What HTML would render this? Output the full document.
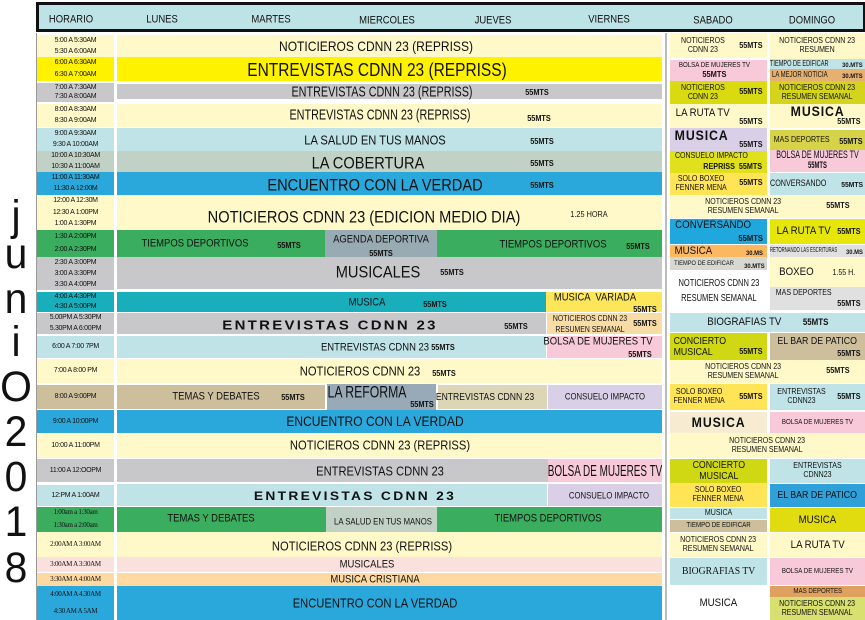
<!DOCTYPE html>
<html><head><meta charset="utf-8">
<style>
*{margin:0;padding:0;box-sizing:border-box}
body{width:865px;height:620px;overflow:hidden;background:#fff;position:relative;font-family:"Liberation Sans",sans-serif;color:#111}
.b{position:absolute}
.t{position:absolute;white-space:nowrap;transform:translate(-50%,-50%) scaleX(.86);line-height:1}
.c{position:absolute;display:flex;align-items:center;justify-content:center;text-align:center;font-size:8px;line-height:1.1;overflow:hidden;white-space:nowrap}
.c p{transform:scaleX(.88)}
.r{position:absolute;right:3px;bottom:1px;font-weight:bold;font-size:8px;transform:scaleX(.9)}
.tm{position:absolute;left:37px;width:77px;display:flex;flex-direction:column;justify-content:space-around;align-items:center;font-size:7px;letter-spacing:-0.3px;line-height:1.1}
.m{font-size:8.5px;font-weight:bold}
.w{letter-spacing:2px;font-weight:bold;transform:translate(-50%,-50%) scaleX(1.15)}
.n{transform:translate(-50%,-50%) scaleX(0.72)}
.L{position:absolute;left:16px;font-size:43px;transform:translateX(-50%) scaleX(.95);line-height:1;font-family:"Liberation Sans",sans-serif}
</style></head><body>
<div class="b" style="left:36px;top:2px;width:829px;height:30px;background:#bde3e6;border:3px solid #111;border-right:2px solid #111"></div>
<div class="t" style="left:71px;top:20px;font-size:11px">HORARIO</div>
<div class="t" style="left:162px;top:20px;font-size:11px">LUNES</div>
<div class="t" style="left:271px;top:20px;font-size:11px">MARTES</div>
<div class="t" style="left:387px;top:21px;font-size:11px">MIERCOLES</div>
<div class="t" style="left:493px;top:21px;font-size:11px">JUEVES</div>
<div class="t" style="left:609px;top:20px;font-size:11px">VIERNES</div>
<div class="t" style="left:713px;top:21px;font-size:11px">SABADO</div>
<div class="t" style="left:812px;top:21px;font-size:11px">DOMINGO</div>
<div class="b" style="left:36px;top:33px;width:1px;height:587px;background:#999"></div>
<div class="b" style="left:665px;top:33px;width:2px;height:587px;background:#bbb"></div>

<div class="L" style="top:195px">j</div>
<div class="L" style="top:233px">u</div>
<div class="L" style="top:278px">n</div>
<div class="L" style="top:321px">i</div>
<div class="L" style="top:366px">O</div>
<div class="L" style="top:411px">2</div>
<div class="L" style="top:456px">0</div>
<div class="L" style="top:501px">1</div>
<div class="L" style="top:547px">8</div>

<div class="tm" style="top:35px;height:22px;background:#fff8c8"><span>5:00 A 5:30AM</span><span>5:30 A 6:00AM</span></div>
<div class="b" style="left:117px;top:35px;width:545px;height:22px;background:#fff8c8"></div>
<div class="tm" style="top:57px;height:24px;background:#fff200"><span>6:00 A 6:30AM</span><span>6:30 A 7:00AM</span></div>
<div class="b" style="left:117px;top:57px;width:545px;height:24px;background:#fff200"></div>
<div class="tm" style="top:83px;height:19px;background:#c8c8ca"><span>7:00 A 7:30AM</span><span>7:30 A 8:00AM</span></div>
<div class="b" style="left:117px;top:84px;width:545px;height:15px;background:#c8c8ca"></div>
<div class="tm" style="top:104px;height:23px;background:#fff8c8"><span>8:00 A 8:30AM</span><span>8:30 A 9:00AM</span></div>
<div class="b" style="left:117px;top:104px;width:545px;height:23px;background:#fff8c8"></div>
<div class="tm" style="top:128px;height:23px;background:#bfe3e6"><span>9:00 A 9:30AM</span><span>9:30 A 10:00AM</span></div>
<div class="b" style="left:117px;top:128px;width:545px;height:23px;background:#bfe3e6"></div>
<div class="tm" style="top:151px;height:21px;background:#c2d1c6"><span>10:00 A 10:30AM</span><span>10:30 A 11:00AM</span></div>
<div class="b" style="left:117px;top:151px;width:545px;height:21px;background:#c2d1c6"></div>
<div class="tm" style="top:172px;height:23px;background:#2aa8dc"><span>11:00 A 11:30AM</span><span>11:30 A 12:00M</span></div>
<div class="b" style="left:117px;top:172px;width:545px;height:23px;background:#2aa8dc"></div>
<div class="tm" style="top:195px;height:35px;background:#fff8c8"><span>12:00 A 12:30M</span><span>12:30 A 1:00PM</span><span>1:00 A 1:30PM</span></div>
<div class="b" style="left:117px;top:195px;width:545px;height:35px;background:#fff8c8"></div>
<div class="tm" style="top:230px;height:27px;background:#3aad5e"><span>1:30 A 2:00PM</span><span>2:00 A 2:30PM</span></div>
<div class="b" style="left:117px;top:230px;width:545px;height:27px;background:#3aad5e"></div>
<div class="b" style="left:325px;top:230px;width:112px;height:27px;background:#98aab2"></div>
<div class="tm" style="top:257px;height:33px;background:#c8c8ca"><span>2:30 A 3:00PM</span><span>3:00 A 3:30PM</span><span>3:30 A 4:00PM</span></div>
<div class="b" style="left:117px;top:257px;width:545px;height:32px;background:#c8c8ca"></div>
<div class="tm" style="top:292px;height:20px;background:#18aebc"><span>4:00 A 4:30PM</span><span>4:30 A 5:00PM</span></div>
<div class="b" style="left:117px;top:292px;width:429px;height:20px;background:#18aebc"></div>
<div class="b" style="left:546px;top:292px;width:116px;height:20px;background:#fde65a"></div>
<div class="tm" style="top:313px;height:21px;background:#c8c8ca"><span>5.00PM A 5:30PM</span><span>5.30PM A 6:00PM</span></div>
<div class="b" style="left:117px;top:313px;width:429px;height:21px;background:#c8c8ca"></div>
<div class="b" style="left:547px;top:313px;width:115px;height:21px;background:#f7dca6"></div>
<div class="tm" style="top:336px;height:22px;background:#bfe3e6"><span>6:00 A 7:00 7PM</span></div>
<div class="b" style="left:117px;top:336px;width:429px;height:22px;background:#bfe3e6"></div>
<div class="b" style="left:547px;top:336px;width:115px;height:22px;background:#f8c9d9"></div>
<div class="tm" style="top:359px;height:24px;background:#fff8c8"><span>7:00 A 8:00 PM</span></div>
<div class="b" style="left:117px;top:359px;width:545px;height:24px;background:#fff8c8"></div>
<div class="tm" style="top:385px;height:24px;background:#cdbf9c"><span>8:00 A 9:00PM</span></div>
<div class="b" style="left:117px;top:385px;width:208px;height:24px;background:#cdbf9c"></div>
<div class="b" style="left:327px;top:384px;width:109px;height:26px;background:#98aab8"></div>
<div class="b" style="left:438px;top:385px;width:109px;height:24px;background:#ddd6b6"></div>
<div class="b" style="left:548px;top:385px;width:114px;height:24px;background:#d9d0e8"></div>
<div class="tm" style="top:410px;height:23px;background:#2aa8dc"><span>9:00 A 10:00PM</span></div>
<div class="b" style="left:117px;top:410px;width:545px;height:23px;background:#2aa8dc"></div>
<div class="tm" style="top:434px;height:24px;background:#fff8c8"><span>10:00 A 11:00PM</span></div>
<div class="b" style="left:117px;top:434px;width:545px;height:24px;background:#fff8c8"></div>
<div class="tm" style="top:459px;height:23px;background:#c8c8ca"><span>11:00 A 12:OOPM</span></div>
<div class="b" style="left:117px;top:459px;width:431px;height:23px;background:#c8c8ca"></div>
<div class="b" style="left:548px;top:459px;width:114px;height:23px;background:#f8c9d9"></div>
<div class="tm" style="top:485px;height:21px;background:#bfe3e6"><span>12:PM A 1:00AM</span></div>
<div class="b" style="left:117px;top:484px;width:430px;height:22px;background:#bfe3e6"></div>
<div class="b" style="left:548px;top:484px;width:114px;height:22px;background:#d9d0e8"></div>
<div class="tm" style="top:507px;height:25px;background:#3aad5e;font-family:'Liberation Serif',serif"><span>1:00am a 1:30am</span><span>1:30am a 2:00am</span></div>
<div class="b" style="left:117px;top:507px;width:545px;height:25px;background:#3aad5e"></div>
<div class="b" style="left:326px;top:507px;width:111px;height:25px;background:#c2d1c6"></div>
<div class="tm" style="top:532px;height:25px;background:#fff8c8;font-family:'Liberation Serif',serif"><span>2:00AM A 3:00AM</span></div>
<div class="b" style="left:117px;top:532px;width:545px;height:25px;background:#fff8c8"></div>
<div class="tm" style="top:557px;height:15px;background:#fbe1de;font-family:'Liberation Serif',serif"><span>3:00AM A 3:30AM</span></div>
<div class="b" style="left:117px;top:557px;width:545px;height:15px;background:#fbe1de"></div>
<div class="tm" style="top:573px;height:13px;background:#fed9a2;font-family:'Liberation Serif',serif"><span>3:30AM A 4:00AM</span></div>
<div class="b" style="left:117px;top:573px;width:545px;height:13px;background:#fed9a2"></div>
<div class="tm" style="top:586px;height:34px;background:#2aa8dc;font-family:'Liberation Serif',serif"><span>4:00AM A 4.30AM</span><span>4:30 AM A 5AM</span></div>
<div class="b" style="left:117px;top:586px;width:545px;height:34px;background:#2aa8dc"></div>

<div class="t" style="left:376px;top:46px;font-size:14px">NOTICIEROS CDNN 23 (REPRISS)</div>
<div class="t" style="left:377px;top:70px;font-size:18px">ENTREVISTAS CDNN 23 (REPRISS)</div>
<div class="t n" style="left:382px;top:92px;font-size:15px">ENTREVISTAS CDNN 23 (REPRISS)</div><div class="t m" style="left:537px;top:92px">55MTS</div>
<div class="t n" style="left:380px;top:115px;font-size:15px">ENTREVISTAS CDNN 23 (REPRISS)</div><div class="t m" style="left:539px;top:118px">55MTS</div>
<div class="t" style="left:375px;top:140px;font-size:13px">LA SALUD EN TUS MANOS</div><div class="t m" style="left:542px;top:141px">55MTS</div>
<div class="t" style="left:368px;top:163px;font-size:17px">LA COBERTURA</div><div class="t m" style="left:542px;top:163px">55MTS</div>
<div class="t" style="left:375px;top:185px;font-size:17px">ENCUENTRO CON LA VERDAD</div><div class="t m" style="left:542px;top:185px">55MTS</div>
<div class="t" style="left:364px;top:217px;font-size:17px">NOTICIEROS CDNN 23 (EDICION MEDIO DIA)</div><div class="t" style="left:589px;top:214px;font-size:8.5px">1.25 HORA</div>
<div class="t" style="left:195px;top:244px;font-size:11px">TIEMPOS DEPORTIVOS</div><div class="t m" style="left:289px;top:245px">55MTS</div>
<div class="t" style="left:381px;top:240px;font-size:11px">AGENDA DEPORTIVA</div><div class="t m" style="left:381px;top:253px">55MTS</div>
<div class="t" style="left:553px;top:245px;font-size:11px">TIEMPOS DEPORTIVOS</div><div class="t m" style="left:638px;top:246px">55MTS</div>
<div class="t" style="left:378px;top:272px;font-size:17px">MUSICALES</div><div class="t m" style="left:452px;top:272px">55MTS</div>
<div class="t" style="left:367px;top:303px;font-size:11px">MUSICA</div><div class="t m" style="left:435px;top:304px">55MTS</div>
<div class="t" style="left:595px;top:298px;font-size:11px">MUSICA &nbsp;VARIADA</div><div class="t m" style="left:645px;top:309px">55MTS</div>
<div class="t w" style="left:330px;top:325px;font-size:13px">ENTREVISTAS CDNN 23</div><div class="t m" style="left:516px;top:326px">55MTS</div>
<div class="t" style="left:590px;top:319px;font-size:8px">NOTICIEROS CDNN 23</div><div class="t" style="left:590px;top:330px;font-size:8px">RESUMEN SEMANAL</div><div class="t m" style="left:645px;top:323px">55MTS</div>
<div class="t" style="left:375px;top:348px;font-size:11px">ENTREVISTAS CDNN 23</div><div class="t m" style="left:443px;top:347px">55MTS</div>
<div class="t" style="left:598px;top:342px;font-size:11px">BOLSA DE MUJERES TV</div><div class="t m" style="left:640px;top:354px">55MTS</div>
<div class="t" style="left:360px;top:371px;font-size:13px">NOTICIEROS CDNN 23</div><div class="t m" style="left:444px;top:373px">55MTS</div>
<div class="t" style="left:216px;top:397px;font-size:11px">TEMAS Y DEBATES</div><div class="t m" style="left:293px;top:397px">55MTS</div>
<div class="t n" style="left:367px;top:392px;font-size:17px">LA REFORMA</div><div class="t m" style="left:422px;top:404px">55MTS</div>
<div class="t" style="left:485px;top:398px;font-size:10px">ENTREVISTAS CDNN 23</div>
<div class="t" style="left:605px;top:397px;font-size:9px">CONSUELO IMPACTO</div>
<div class="t" style="left:375px;top:421px;font-size:14px">ENCUENTRO CON LA VERDAD</div>
<div class="t" style="left:380px;top:445px;font-size:13px">NOTICIEROS CDNN 23 (REPRISS)</div>
<div class="t" style="left:380px;top:471px;font-size:13px">ENTREVISTAS CDNN 23</div>
<div class="t" style="left:605px;top:472px;font-size:16px;transform:translate(-50%,-50%) scaleX(.62)">BOLSA DE MUJERES TV</div>
<div class="t w" style="left:355px;top:496px;font-size:12px">ENTREVISTAS CDNN 23</div>
<div class="t" style="left:609px;top:496px;font-size:9px">CONSUELO IMPACTO</div>
<div class="t" style="left:211px;top:519px;font-size:11px">TEMAS Y DEBATES</div>
<div class="t" style="left:383px;top:522px;font-size:9px">LA SALUD EN TUS MANOS</div>
<div class="t" style="left:548px;top:519px;font-size:11px">TIEMPOS DEPORTIVOS</div>
<div class="t" style="left:362px;top:546px;font-size:13px">NOTICIEROS CDNN 23 (REPRISS)</div>
<div class="t" style="left:367px;top:565px;font-size:11px">MUSICALES</div>
<div class="t" style="left:375px;top:580px;font-size:11px">MUSICA CRISTIANA</div>
<div class="t" style="left:375px;top:603px;font-size:13px">ENCUENTRO CON LA VERDAD</div>

<!-- saturday -->
<div class="c" style="left:670px;top:33px;width:97px;height:25px;background:#fff8c8;justify-content:flex-start;padding-left:8px"><p>NOTICIEROS<br>CDNN 23</p><span class="r" style="bottom:7px">55MTS</span></div>
<div class="c" style="left:670px;top:60px;width:97px;height:21px;background:#f8c9d9;justify-content:flex-start;padding-left:4px"><p style="font-size:7px">BOLSA DE MUJERES TV<br><b style="font-size:8.5px">55MTS</b></p></div>
<div class="c" style="left:670px;top:81px;width:97px;height:23px;background:#dada10;justify-content:flex-start;padding-left:8px"><p>NOTICIEROS<br>CDNN 23</p><span class="r" style="bottom:7px">55MTS</span></div>
<div class="c" style="left:670px;top:104px;width:97px;height:24px;background:#fff8c8;justify-content:flex-start;padding-left:2px;align-items:flex-start;padding-top:3px"><p style="font-size:11px">LA RUTA TV</p><span class="r">55MTS</span></div>
<div class="c" style="left:670px;top:128px;width:97px;height:23px;background:#d9d0e8;justify-content:flex-start;align-items:flex-start;padding-left:1px"><p><b style="font-size:14px;letter-spacing:1px">MUSICA</b></p><span class="r">55MTS</span></div>
<div class="c" style="left:670px;top:151px;width:97px;height:22px;background:#e0e01c;justify-content:flex-start;align-items:flex-start;padding-left:0;padding-top:1px"><p>CONSUELO IMPACTO</p><span class="r" style="right:2px">REPRISS &nbsp;55MTS</span></div>
<div class="c" style="left:670px;top:173px;width:97px;height:22px;background:#ffe455;justify-content:flex-start;padding-left:2px"><p>SOLO BOXEO<br>FENNER MENA</p><span class="r" style="bottom:7px">55MTS</span></div>
<div class="c" style="left:670px;top:195px;width:195px;height:23px;background:#fff8c8;justify-content:flex-start;padding-left:30px"><p>NOTICIEROS CDNN 23<br>RESUMEN SEMANAL</p><span class="r" style="right:14px;bottom:7px">55MTS</span></div>
<div class="c" style="left:670px;top:219px;width:97px;height:25px;background:#20a8dc;justify-content:flex-start;align-items:flex-start;padding-left:0"><p style="font-size:11px">CONVERSANDO</p><span class="r" style="font-size:8.5px">55MTS</span></div>
<div class="c" style="left:670px;top:245px;width:97px;height:12px;background:#fbb860;justify-content:flex-start;padding-left:2px"><p style="font-size:11px">MUSICA</p><span class="r" style="font-size:6.5px;bottom:0">30.MS</span></div>
<div class="c" style="left:670px;top:257px;width:97px;height:13px;background:#d8d8d2;justify-content:flex-start;padding-left:0"><p style="font-size:6.5px">TIEMPO DE EDIFICAR</p><span class="r" style="font-size:6.5px;bottom:0;right:1px">30.MTS</span></div>
<div class="c" style="left:670px;top:272px;width:97px;height:38px;background:#fff"><p style="font-size:10px;line-height:1.5;transform:scaleX(.75)">NOTICIEROS CDNN 23<br>RESUMEN SEMANAL</p></div>
<div class="c" style="left:670px;top:313px;width:195px;height:19px;background:#bfe3e6"><p style="font-size:11px">BIOGRAFIAS TV &nbsp;&nbsp;&nbsp;&nbsp;&nbsp;&nbsp;&nbsp;<b style="font-size:9px">55MTS</b></p></div>
<div class="c" style="left:670px;top:333px;width:97px;height:27px;background:#d0d814;justify-content:flex-start;padding-left:0;text-align:left"><p style="font-size:10px">CONCIERTO<br>MUSICAL</p><span class="r" style="bottom:3px">55MTS</span></div>
<div class="c" style="left:670px;top:360px;width:195px;height:23px;background:#fff8c8;justify-content:flex-start;padding-left:30px"><p>NOTICIEROS CDNN 23<br>RESUMEN SEMANAL</p><span class="r" style="right:14px;bottom:7px">55MTS</span></div>
<div class="c" style="left:670px;top:384px;width:97px;height:26px;background:#ffe455;justify-content:flex-start;padding-left:0"><p>SOLO BOXEO<br>FENNER MENA</p><span class="r" style="bottom:8px">55MTS</span></div>
<div class="c" style="left:670px;top:412px;width:97px;height:21px;background:#f7ecd2"><p><b style="font-size:14px;letter-spacing:1px">MUSICA</b></p></div>
<div class="c" style="left:670px;top:433px;width:195px;height:25px;background:#fff8c8"><p>NOTICIEROS CDNN 23<br>RESUMEN SEMANAL</p></div>
<div class="c" style="left:670px;top:459px;width:97px;height:24px;background:#d0d814"><p style="font-size:10px">CONCIERTO<br>MUSICAL</p></div>
<div class="c" style="left:670px;top:483px;width:97px;height:24px;background:#ffe455"><p>SOLO BOXEO<br>FENNER MENA</p></div>
<div class="c" style="left:670px;top:508px;width:97px;height:11px;background:#bfe3e6"><p>MUSICA</p></div>
<div class="c" style="left:670px;top:520px;width:97px;height:12px;background:#cdbf9c"><p style="font-size:7px">TIEMPO DE EDIFICAR</p></div>
<div class="c" style="left:670px;top:533px;width:97px;height:24px;background:#fff8c8"><p>NOTICIEROS CDNN 23<br>RESUMEN SEMANAL</p></div>
<div class="c" style="left:670px;top:558px;width:97px;height:27px;background:#bfe3e6"><p style="font-family:'Liberation Serif',serif;font-size:11px">BIOGRAFIAS TV</p></div>
<div class="c" style="left:670px;top:586px;width:97px;height:34px;background:#fff"><p style="font-size:11px">MUSICA</p></div>

<!-- sunday -->
<div class="c" style="left:770px;top:33px;width:95px;height:26px;background:#fff8c8"><p>NOTICIEROS CDNN 23<br>RESUMEN</p></div>
<div class="c" style="left:770px;top:59px;width:95px;height:10px;background:#bfe3e6;justify-content:flex-start;padding-left:0"><p style="font-size:8px;transform:scaleX(.7);transform-origin:left">TIEMPO DE EDIFICAR</p><span class="r" style="font-size:6.5px;bottom:0;right:1px">30.MTS</span></div>
<div class="c" style="left:770px;top:69px;width:95px;height:12px;background:#e6b070;justify-content:flex-start;padding-left:2px"><p style="font-size:8px;transform:scaleX(.75);transform-origin:left">LA MEJOR NOTICIA</p><span class="r" style="font-size:6.5px;bottom:1px;right:1px">30.MTS</span></div>
<div class="c" style="left:770px;top:81px;width:95px;height:23px;background:#d4d41c"><p>NOTICIEROS CDNN 23<br>RESUMEN SEMANAL</p></div>
<div class="c" style="left:770px;top:104px;width:95px;height:24px;background:#fff8c8;align-items:flex-start"><p><b style="font-size:14px;letter-spacing:1px">MUSICA</b></p><span class="r">55MTS</span></div>
<div class="c" style="left:770px;top:130px;width:95px;height:20px;background:#d6d24a;justify-content:flex-start;padding-left:0"><p>MAS DEPORTES</p><span class="r" style="bottom:3px;right:1px">55MTS</span></div>
<div class="c" style="left:770px;top:150px;width:95px;height:22px;background:#f8c9d9"><p style="font-size:11px;transform:scaleX(.65);line-height:.9">BOLSA DE MUJERES TV<br><b style="font-size:9px">55MTS</b></p></div>
<div class="c" style="left:770px;top:173px;width:95px;height:22px;background:#bfe3e6;justify-content:flex-start;padding-left:0"><p style="font-size:9px;transform:scaleX(.8);transform-origin:left">CONVERSANDO</p><span class="r" style="bottom:6px;right:1px;font-size:7.5px">55MTS</span></div>
<div class="c" style="left:770px;top:219px;width:95px;height:25px;background:#e6e60a;justify-content:flex-start;padding-left:3px"><p style="font-size:11px">LA RUTA TV</p><span class="r" style="bottom:7px">55MTS</span></div>
<div class="c" style="left:770px;top:245px;width:95px;height:12px;background:#e0e0e0;justify-content:flex-start;padding-left:0"><p style="font-size:7px;transform:scaleX(.6);transform-origin:left">RETORNANDO LAS ESCRITURAS</p><span class="r" style="font-size:6.5px;bottom:1px;right:1px">30.MS</span></div>
<div class="c" style="left:770px;top:257px;width:95px;height:30px;background:#fff8c8;justify-content:flex-start;padding-left:4px"><p style="font-size:11px">BOXEO &nbsp;&nbsp;&nbsp;&nbsp;&nbsp;&nbsp;<span style="font-size:8px">1.55 H.</span></p></div>
<div class="c" style="left:770px;top:287px;width:95px;height:23px;background:#e0e0e0;justify-content:flex-start;align-items:flex-start;padding-left:2px;padding-top:2px"><p>MAS DEPORTES</p><span class="r">55MTS</span></div>
<div class="c" style="left:770px;top:333px;width:95px;height:27px;background:#cdbf9c;align-items:flex-start;padding-top:3px"><p style="font-size:10px">EL BAR DE PATICO</p><span class="r">55MTS</span></div>
<div class="c" style="left:770px;top:384px;width:95px;height:26px;background:#bfe3e6;justify-content:flex-start;padding-left:4px"><p>ENTREVISTAS<br>CDNN23</p><span class="r" style="bottom:8px">55MTS</span></div>
<div class="c" style="left:770px;top:412px;width:95px;height:21px;background:#f8c9d9"><p style="font-size:7px">BOLSA DE MUJERES TV</p></div>
<div class="c" style="left:770px;top:459px;width:95px;height:24px;background:#bfe3e6"><p>ENTREVISTAS<br>CDNN23</p></div>
<div class="c" style="left:770px;top:484px;width:95px;height:23px;background:#30a0d8"><p style="font-size:10px">EL BAR DE PATICO</p></div>
<div class="c" style="left:770px;top:508px;width:95px;height:24px;background:#e0dc10"><p style="font-size:11px">MUSICA</p></div>
<div class="c" style="left:770px;top:533px;width:95px;height:24px;background:#fff8c8"><p style="font-size:11px">LA RUTA TV</p></div>
<div class="c" style="left:770px;top:558px;width:95px;height:27px;background:#f8c9d9"><p style="font-size:7px">BOLSA DE MUJERES TV</p></div>
<div class="c" style="left:770px;top:586px;width:95px;height:11px;background:#e0a060"><p style="font-size:7px">MAS DEPORTES</p></div>
<div class="c" style="left:770px;top:597px;width:95px;height:23px;background:#d8e070"><p>NOTICIEROS CDNN 23<br>RESUMEN SEMANAL</p></div>
</body></html>
